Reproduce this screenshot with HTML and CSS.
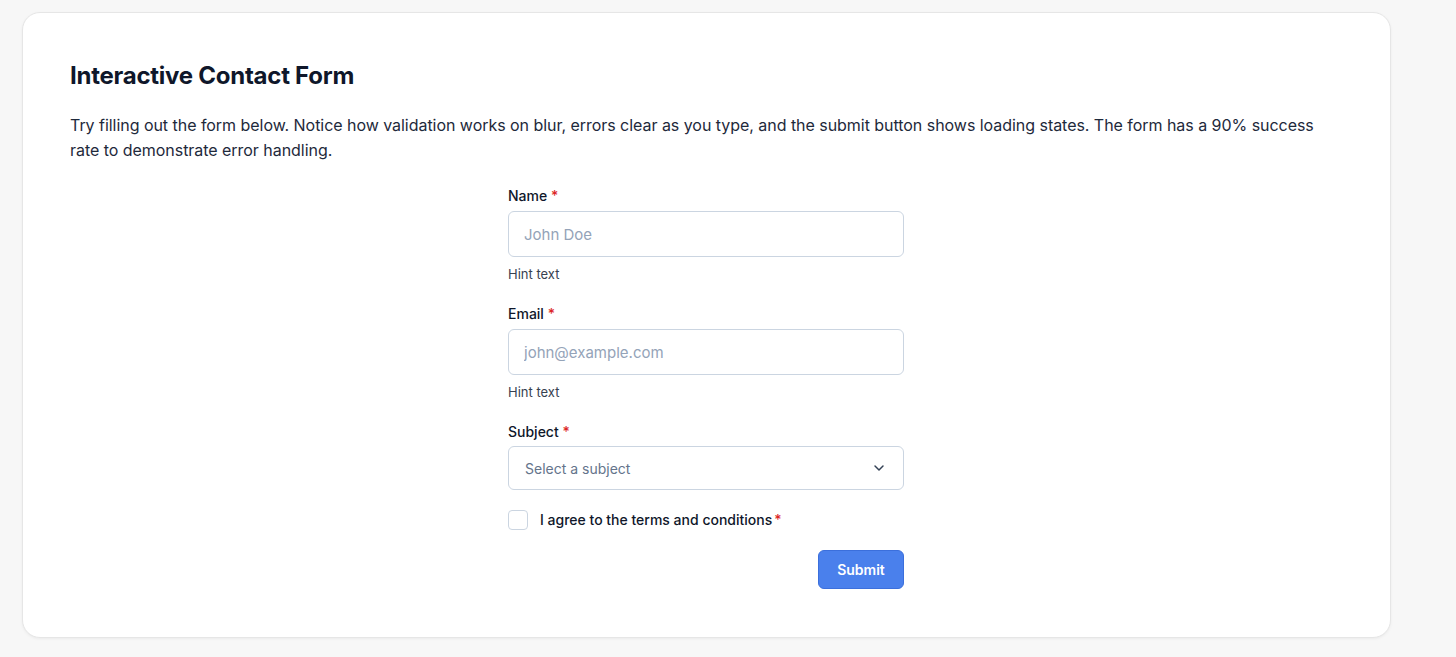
FILE: index.html
```html
<!DOCTYPE html>
<html lang="en">
<head>
<meta charset="utf-8">
<title>Interactive Contact Form</title>
<link rel="stylesheet" href="styles.css">
</head>
<body>
<main class="card">
  <h1 class="title">Interactive Contact Form</h1>
  <p class="desc">Try filling out the form below. Notice how validation works on blur, errors clear as you type, and the submit button shows loading states. The form has a 90% success rate to demonstrate error handling.</p>
  <form class="form">
    <div class="field">
      <label class="label" for="name">Name <span class="req">*</span></label>
      <input class="input" id="name" type="text" placeholder="John Doe">
      <div class="hint">Hint text</div>
    </div>
    <div class="field">
      <label class="label" for="email">Email <span class="req">*</span></label>
      <input class="input" id="email" type="email" placeholder="john@example.com">
      <div class="hint">Hint text</div>
    </div>
    <div class="field">
      <label class="label label-select" for="subject">Subject <span class="req">*</span></label>
      <div class="select-wrap">
        <select class="select" id="subject">
          <option>Select a subject</option>
        </select>
        <svg class="chev" width="16" height="16" viewBox="0 0 24 24" fill="none" stroke="#334155" stroke-width="2.2" stroke-linecap="round" stroke-linejoin="round"><path d="M6 9l6 6 6-6"/></svg>
      </div>
    </div>
    <label class="check-row">
      <span class="box"></span>
      <span class="check-text">I agree to the terms and conditions<span class="req">*</span></span>
    </label>
    <div class="actions">
      <button type="button" class="btn">Submit</button>
    </div>
  </form>
</main>
</body>
</html>
```
FILE: styles.css
```css
* { box-sizing: border-box; }
html, body { margin: 0; }
body {
  background: #f7f7f7;
  font-family: Inter, "Noto Sans", sans-serif;
  color: #0f172a;
  padding: 12px 0 20px 22px;
}
.card {
  width: 1369px;
  background: #fff;
  border: 1px solid #e6e6e6;
  border-radius: 18px;
  box-shadow: 0 1px 3px rgba(0,0,0,0.05);
  padding: 47px 48px 48px 47px;
}
.title {
  margin: 0 0 21px;
  font-size: 24px;
  line-height: 32px;
  font-weight: 700;
  color: #0f172a;
  letter-spacing: -0.25px;
}
.desc {
  margin: 0 0 23px;
  font-size: 16px;
  line-height: 25px;
  color: #1e293b;
  letter-spacing: -0.04px;
}
.form {
  width: 396px;
  margin: 0 auto;
  display: flex;
  flex-direction: column;
  gap: 20px;
}
.field { display: flex; flex-direction: column; }
.label {
  font-size: 14px;
  line-height: 20px;
  font-weight: 500;
  color: #0f172a;
  margin-bottom: 5px;
}
.label-select { margin-bottom: 4px; }
.req { color: #dc2626; }
.input {
  height: 46px;
  border: 1px solid #cbd5e1;
  border-radius: 6px;
  padding: 0 15px;
  font-family: inherit;
  font-size: 15px;
  color: #0f172a;
  background: #fff;
  outline: none;
}
.input::placeholder { color: #94a3b8; }
.hint {
  margin-top: 7px;
  font-size: 13px;
  line-height: 20px;
  color: #374151;
}
.select-wrap { position: relative; }
.select {
  width: 100%;
  height: 44px;
  appearance: none;
  -webkit-appearance: none;
  border: 1px solid #cbd5e1;
  border-radius: 6px;
  padding: 0 16px;
  font-family: inherit;
  font-size: 14px;
  color: #64748b;
  background: #fff;
  outline: none;
}
.chev {
  position: absolute;
  right: 17px;
  top: 14px;
  pointer-events: none;
}
.check-row {
  display: flex;
  align-items: center;
  gap: 12px;
  height: 20px;
}
.box {
  width: 20px;
  height: 20px;
  border: 1.5px solid #cbd5e1;
  border-radius: 4px;
  background: #fff;
}
.check-text {
  font-size: 14px;
  line-height: 20px;
  font-weight: 500;
  color: #0f172a;
}
.check-text .req { margin-left: 2px; }
.actions { display: flex; justify-content: flex-end; }
.btn {
  width: 86px;
  height: 39px;
  background: #4a80ec;
  border: 1px solid #3b6fdc;
  border-radius: 6px;
  color: #fff;
  font-family: inherit;
  font-size: 14px;
  font-weight: 600;
}
```
